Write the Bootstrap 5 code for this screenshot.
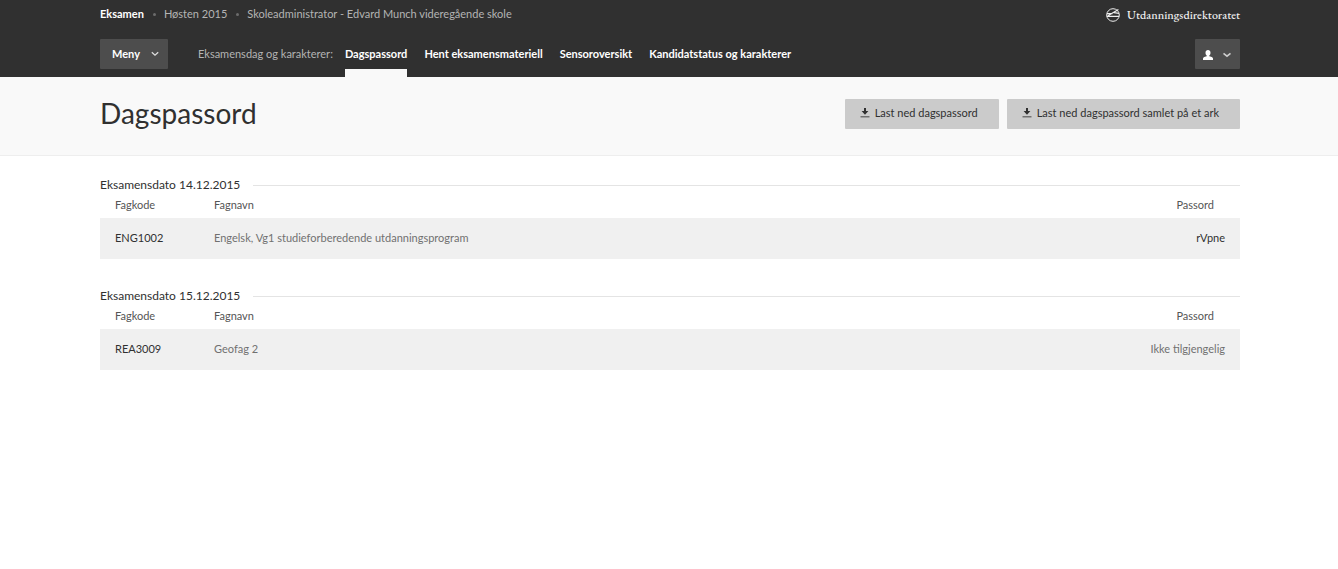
<!DOCTYPE html>
<html lang="nb">
<head>
<meta charset="utf-8">
<meta name="viewport" content="width=device-width, initial-scale=1">
<title>Dagspassord</title>
<link href="https://cdn.jsdelivr.net/npm/bootstrap@5.3.0/dist/css/bootstrap.min.css" rel="stylesheet">
<style>
body { font-family: Lato, "Open Sans", sans-serif; font-size: 11px; line-height: 16px; color: #303030; background: #fff; }
.page-width { max-width: 1142px; padding-left: 2px; padding-right: 0; }
.site-header { background: #303030; color: #b4b4b4; }
.top-line { height: 28px; }
.crumbs a { color: #b4b4b4; }
.crumbs .breadcrumb-item:first-child a { color: #fff; font-weight: 700; }
.crumbs .breadcrumb-item + .breadcrumb-item { display: flex; padding-left: 0; margin-left: 9px; }
.crumbs .breadcrumb-item + .breadcrumb-item::before { content: ""; width: 3px; height: 3px; padding: 0; margin: 7px 8px 0 0; border-radius: 50%; background: #6c6c6c; }
.owner { font-family: "EB Garamond", "Liberation Serif", serif; font-size: 12px; font-weight: 500; color: #eee; gap: 7px; padding-top: 2px; }
.main-line { height: 49px; }
.square-btn { height: 30px; border: 0; border-radius: 1px; font-size: 11px; line-height: 16px; padding: 0 12px; }
.dark-btn, .dark-btn:hover { background: #4d4d4d; color: #fff; }
.menu-btn { width: 68px; padding-right: 9px; font-weight: 700; }
.user-btn { width: 45px; padding: 2px 9px 0 8px; }
.tabs { gap: 17px; }
.tabs .nav-link { padding: 7px 0; height: 38px; color: #fff; font-weight: 700; line-height: 16px; border-bottom: 8px solid transparent; }
.tabs .nav-link.active { border-bottom-color: #f9f9f9; }
.section-name { margin-left: 30px; margin-right: 12px; padding-top: 7px; }
.title-band { background: #f9f9f9; border-bottom: 1px solid #eee; padding: 22px 0 26px; }
.title-band h1 { font-size: 28px; line-height: 28px; font-weight: 400; }
.gray-btn, .gray-btn:hover { background: #cbcbcb; color: #303030; padding: 0 21px 2px 15px; gap: 5px; }
.exam-list { padding-top: 21px; }
.exam-day { margin-bottom: 29px; }
.exam-day h2 { font-size: 12px; line-height: 16px; font-weight: 400; gap: 13px; }
.exam-day h2::after { content: ""; flex: 1; height: 1px; background: #e4e4e4; }
.exam-table { table-layout: fixed; }
.exam-table th { font-weight: 400; color: #555; padding: 4px 15px 5px; }
.exam-table th:last-child { padding-right: 26px; }
.exam-table td { background: #f0f0f0; color: #707070; padding: 12px 15px 13px; }
.exam-table th:nth-child(2), .exam-table td:nth-child(2) { padding-left: 0; }
.exam-table .code { width: 114px; }
.exam-table .pass { width: 200px; }
.exam-table td.strong-cell { color: #303030; }
</style>
</head>
<body>
<header class="site-header">
  <div class="container-fluid page-width">
    <div class="top-line d-flex justify-content-between align-items-center">
      <nav aria-label="Plassering">
        <ol class="breadcrumb crumbs m-0">
          <li class="breadcrumb-item"><a class="text-decoration-none" href="#">Eksamen</a></li>
          <li class="breadcrumb-item"><a class="text-decoration-none" href="#">Høsten 2015</a></li>
          <li class="breadcrumb-item"><a class="text-decoration-none" href="#">Skoleadministrator - Edvard Munch videregående skole</a></li>
        </ol>
      </nav>
      <a class="owner d-flex align-items-center text-decoration-none" href="#">
        <svg width="14" height="14" viewBox="0 0 14 14" fill="none" stroke="#eee" aria-hidden="true"><circle cx="7" cy="7" r="6.3"/><path d="M1 5.7H6.5M.8 8.4H13.2M2 7.8 12.4 1.4M8 4.6 13 5.4" stroke-width="1.2"/></svg>
        <span>Utdanningsdirektoratet</span>
      </a>
    </div>
    <div class="main-line d-flex align-items-end">
      <div class="d-flex flex-fill">
        <button type="button" class="btn square-btn dark-btn menu-btn d-flex align-items-center justify-content-between">Meny
          <svg width="8" height="6" viewBox="0 0 8 6" fill="none" stroke="#ddd" stroke-width="1.3" aria-hidden="true"><path d="M.8 1.2 4 4.2 7.2 1.2"/></svg>
        </button>
        <span class="section-name">Eksamensdag og karakterer:</span>
        <nav class="nav tabs" aria-label="Eksamensdag og karakterer">
          <a class="nav-link active" aria-current="page" href="#">Dagspassord</a>
          <a class="nav-link" href="#">Hent eksamensmateriell</a>
          <a class="nav-link" href="#">Sensoroversikt</a>
          <a class="nav-link" href="#">Kandidatstatus og karakterer</a>
        </nav>
        <button type="button" class="btn square-btn dark-btn user-btn d-flex align-items-center justify-content-between ms-auto" aria-label="Bruker">
          <svg width="10" height="10" viewBox="0 0 10 10" fill="#fff" aria-hidden="true"><path d="M5 0C3.5 0 2.5 1 2.5 2.7 2.5 4.1 3 4.9 3.7 5.5V6.2L1.2 6.9C.4 7.2 0 7.8 0 8.6V10H10V8.6C10 7.8 9.6 7.2 8.8 6.9L6.3 6.2V5.5C7 4.9 7.5 4.1 7.5 2.7 7.5 1 6.5 0 5 0Z"/></svg>
          <svg width="8" height="6" viewBox="0 0 8 6" fill="none" stroke="#ccc" stroke-width="1.6" aria-hidden="true"><path d="M.5 1.4 4 4.2 7.5 1.4"/></svg>
        </button>
      </div>
    </div>
  </div>
</header>
<section class="title-band">
  <div class="container-fluid page-width d-flex justify-content-between align-items-start">
    <h1 class="m-0">Dagspassord</h1>
    <div class="d-flex gap-2">
      <button type="button" class="btn square-btn gray-btn d-flex align-items-center">
        <svg width="10" height="10" viewBox="0 0 10 10" aria-hidden="true"><path d="M4 0H6V3H8.4L5 6.8 1.6 3H4Z" fill="#303030"/><path d="M.5 8H9.5V9.5H.5Z" fill="#707070"/></svg>
        Last ned dagspassord
      </button>
      <button type="button" class="btn square-btn gray-btn d-flex align-items-center">
        <svg width="10" height="10" viewBox="0 0 10 10" aria-hidden="true"><path d="M4 0H6V3H8.4L5 6.8 1.6 3H4Z" fill="#303030"/><path d="M.5 8H9.5V9.5H.5Z" fill="#707070"/></svg>
        Last ned dagspassord samlet på et ark
      </button>
    </div>
  </div>
</section>
<main class="container-fluid page-width exam-list">
  <section class="exam-day">
    <h2 class="d-flex align-items-center m-0">Eksamensdato 14.12.2015</h2>
    <table class="exam-table w-100">
      <thead><tr><th class="code" scope="col">Fagkode</th><th scope="col">Fagnavn</th><th class="pass text-end" scope="col">Passord</th></tr></thead>
      <tbody><tr><td class="strong-cell">ENG1002</td><td>Engelsk, Vg1 studieforberedende utdanningsprogram</td><td class="text-end strong-cell">rVpne</td></tr></tbody>
    </table>
  </section>
  <section class="exam-day">
    <h2 class="d-flex align-items-center m-0">Eksamensdato 15.12.2015</h2>
    <table class="exam-table w-100">
      <thead><tr><th class="code" scope="col">Fagkode</th><th scope="col">Fagnavn</th><th class="pass text-end" scope="col">Passord</th></tr></thead>
      <tbody><tr><td class="strong-cell">REA3009</td><td>Geofag 2</td><td class="text-end">Ikke tilgjengelig</td></tr></tbody>
    </table>
  </section>
</main>
<script src="https://cdn.jsdelivr.net/npm/bootstrap@5.3.0/dist/js/bootstrap.bundle.min.js"></script>
</body>
</html>
